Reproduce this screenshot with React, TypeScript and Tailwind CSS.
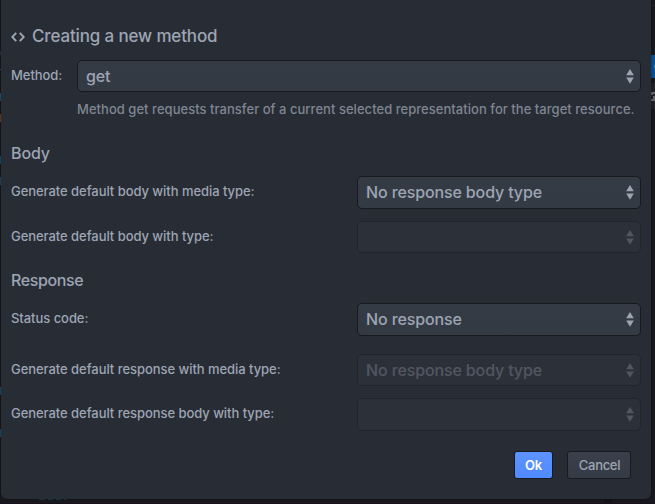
import React from "react";

function Arrows() {
  return (
    <svg width="8" height="15" viewBox="0 0 8 15" className="shrink-0" fill="currentColor">
      <path d="M4 0 7.8 6.2H.2z" />
      <path d="M.2 8.6h7.6L4 14.8z" />
    </svg>
  );
}

function Select({ value = "", disabled = false, className = "" }: { value?: string; disabled?: boolean; className?: string }) {
  return (
    <button
      type="button"
      disabled={disabled}
      className={`flex items-center justify-between rounded-[5px] border border-[#181a1f] bg-linear-to-b from-[#353b45] to-[#333a43] pl-2 pr-[6px] text-left text-[16px] leading-[30px] tracking-[-0.13px] text-[#9da5b4] ${disabled ? "opacity-35" : ""} ${className}`}
    >
      <span className="-mt-px whitespace-nowrap">{value}</span>
      <Arrows />
    </button>
  );
}

function Row({ label, className = "", children }: { label: string; className?: string; children: React.ReactNode }) {
  return (
    <div className={`flex items-center justify-between ${className}`}>
      <label className="whitespace-nowrap pb-[3px] text-[13px] leading-4 tracking-[-0.05px]">{label}</label>
      {children}
    </div>
  );
}

function Backdrop() {
  return (
    <div className="absolute inset-0 bg-[#17191e]">
      <div className="absolute left-0 top-[51px] h-[4px] w-px bg-[#30343c]" />
      <div className="absolute left-0 top-[69px] h-px w-px bg-[#286292]" />
      <div className="absolute left-0 top-[93px] h-[8px] w-px bg-[#26527a]" />
      <div className="absolute left-0 top-[114px] h-[8px] w-px bg-[#75401d]" />
      <div className="absolute left-0 top-[156px] h-[8px] w-px bg-[#214b70]" />
      <div className="absolute left-0 top-[177px] h-[8px] w-px bg-[#214b70]" />
      <div className="absolute left-0 top-[387px] h-[8px] w-px bg-[#214b70]" />
      <div className="absolute left-0 top-[429px] h-[8px] w-px bg-[#214b70]" />
      <div className="absolute right-0 top-[5px] h-px w-[4px] bg-[#24262b]" />
      <div className="absolute right-0 top-[55px] h-[23px] w-[4px] bg-[#07539a]" />
      <div className="absolute right-0 top-[65px] h-[3px] w-px bg-[#2f8798]" />
      <div className="absolute right-0 top-[83px] h-[26px] w-[4px] bg-[#202228]" />
      <div className="absolute right-[2px] top-[92px] h-[3px] w-[2px] bg-[#66686d]" />
      <div className="absolute right-[2px] top-[99px] h-[2px] w-[2px] bg-[#66686d]" />
      <div className="absolute right-0 top-[92px] h-[2px] w-[2px] bg-[#66686d]" />
      <div className="absolute right-0 top-[96px] h-[5px] w-[2px] bg-[#66686d]" />
      <div className="absolute bottom-[4px] left-[39px] flex gap-[3px]">
        <i className="h-px w-[6px] bg-[#204047]" />
        <i className="h-px w-[5px] bg-[#204047]" />
        <i className="h-px w-[5px] bg-[#204047]" />
        <i className="h-px w-[2px] bg-[#204047]" />
      </div>
      <div className="absolute bottom-0 left-[604px] h-[5px] w-[8px] bg-[#121317]" />
      <div className="absolute inset-x-0 bottom-0 h-px bg-[#18101a]" />
    </div>
  );
}

export default function App() {
  return (
    <div className="relative h-[504px] w-[655px] overflow-hidden font-['Inter','Liberation_Sans',sans-serif] font-[450] text-[#9da5b4]">
      <Backdrop />
      <main className="relative ml-px flex h-[499px] w-[650px] flex-col rounded-b-[6px] bg-[#282c34] pl-[10px] pr-[10px] pt-[24px] shadow-[0_0_3px_rgba(0,0,0,0.5)]">
        <h1 className="flex h-6 items-center gap-[7px] text-[17px] leading-6 tracking-[-0.15px]">
          <svg width="14" height="12" viewBox="0 0 14 12" fill="none" stroke="currentColor" strokeWidth="1.9" className="mt-px">
            <path d="M5.2 1.8 1.3 6l3.9 4.2M8.8 1.8 12.7 6l-3.9 4.2" />
          </svg>
          <span className="whitespace-nowrap">Creating a new method</span>
        </h1>
        <Row label="Method:" className="mt-3">
          <Select value="get" className="h-8 w-[564px]" />
        </Row>
        <p className="ml-[66px] mt-[9px] whitespace-nowrap text-[13px] leading-4 tracking-[0.035px] text-[#7f8693]">
          Method get requests transfer of a current selected representation for the target resource.
        </p>
        <h2 className="mt-[24px] text-[16px] leading-6 tracking-[-0.1px]">Body</h2>
        <Row label="Generate default body with media type:" className="mt-[11px]">
          <Select value="No response body type" className="h-[33px] w-[284px]" />
        </Row>
        <Row label="Generate default body with type:" className="mt-3">
          <Select disabled className="h-8 w-[284px]" />
        </Row>
        <h2 className="mt-[15px] text-[16px] leading-6 tracking-[-0.4px]">Response</h2>
        <Row label="Status code:" className="mt-[11px]">
          <Select value="No response" className="h-[33px] w-[284px]" />
        </Row>
        <Row label="Generate default response with media type:" className="mt-[18px]">
          <Select value="No response body type" disabled className="h-8 w-[284px]" />
        </Row>
        <Row label="Generate default response body with type:" className="mt-3">
          <Select disabled className="h-[33px] w-[284px]" />
        </Row>
        <div className="mr-[10px] mt-5 flex justify-end gap-[14px] text-[13px]">
          <button type="button" className="h-7 w-[39px] rounded-[3px] border border-[#181a1f] bg-linear-to-b from-[#5d93ff] to-[#4f8aff] pt-[2px] font-semibold tracking-[-0.2px] text-white">
            Ok
          </button>
          <button type="button" className="h-7 w-16 rounded-[3px] border border-[#181a1f] bg-linear-to-b from-[#3a3f4b] to-[#353b45] pl-px pt-[2px] tracking-[-0.3px]">
            Cancel
          </button>
        </div>
      </main>
    </div>
  );
}
